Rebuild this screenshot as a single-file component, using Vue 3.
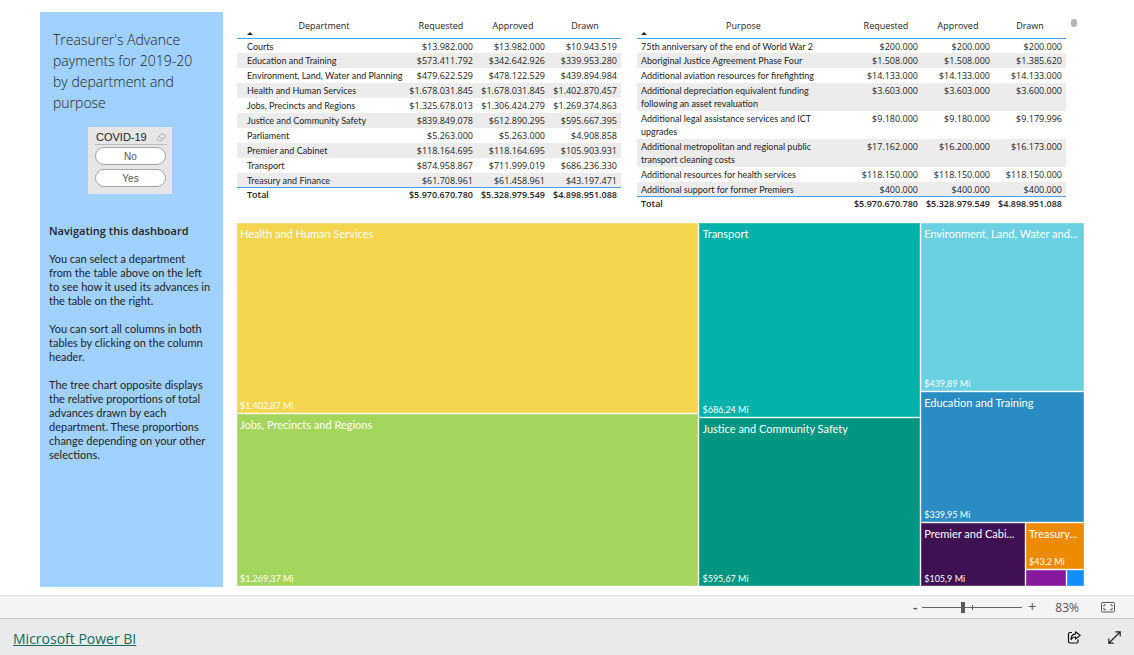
<script setup>
const departments = {
  name: 'Department',
  rows: [
    ['Courts', '$13.982.000', '$13.982.000', '$10.943.519'],
    ['Education and Training', '$573.411.792', '$342.642.926', '$339.953.280'],
    ['Environment, Land, Water and Planning', '$479.622.529', '$478.122.529', '$439.894.984'],
    ['Health and Human Services', '$1.678.031.845', '$1.678.031.845', '$1.402.870.457'],
    ['Jobs, Precincts and Regions', '$1.325.678.013', '$1.306.424.279', '$1.269.374.863'],
    ['Justice and Community Safety', '$839.849.078', '$612.890.295', '$595.667.395'],
    ['Parliament', '$5.263.000', '$5.263.000', '$4.908.858'],
    ['Premier and Cabinet', '$118.164.695', '$118.164.695', '$105.903.931'],
    ['Transport', '$874.958.867', '$711.999.019', '$686.236.330'],
    ['Treasury and Finance', '$61.708.961', '$61.458.961', '$43.197.471'],
  ],
}
const purposes = {
  name: 'Purpose',
  rows: [
    ['75th anniversary of the end of World War 2', '$200.000', '$200.000', '$200.000'],
    ['Aboriginal Justice Agreement Phase Four', '$1.508.000', '$1.508.000', '$1.385.620'],
    ['Additional aviation resources for firefighting', '$14.133.000', '$14.133.000', '$14.133.000'],
    ['Additional depreciation equivalent funding following an asset revaluation', '$3.603.000', '$3.603.000', '$3.600.000'],
    ['Additional legal assistance services and ICT upgrades', '$9.180.000', '$9.180.000', '$9.179.996'],
    ['Additional metropolitan and regional public transport cleaning costs', '$17.162.000', '$16.200.000', '$16.173.000'],
    ['Additional resources for health services', '$118.150.000', '$118.150.000', '$118.150.000'],
    ['Additional support for former Premiers', '$400.000', '$400.000', '$400.000'],
  ],
}
const tables = [departments, purposes]
const totals = ['$5.970.670.780', '$5.328.979.549', '$4.898.951.088']
</script>

<template>
  <div class="page">
    <main class="report">
      <aside class="panel">
        <h1>Treasurer's Advance payments for 2019-20 by department and purpose</h1>
        <section class="slicer">
          <header>
            <span>COVID-19</span>
            <button class="clear" aria-label="Clear selections">
              <svg width="11" height="10" viewBox="0 0 11 10" fill="none" stroke="#b0b0b0">
                <path d="M1 6.5 6 1.2 9.8 4.4 5 9H3.4L1 6.5ZM3.2 4.4 6.8 7.4" />
              </svg>
            </button>
          </header>
          <button class="choice">No</button>
          <button class="choice">Yes</button>
        </section>
        <div class="guide">
          <h2>Navigating this dashboard</h2>
          <p>You can select a department<br />from the table above on the left to see how it used its advances in the table on the right.</p>
          <p>You can sort all columns in both tables by clicking on the column header.</p>
          <p>The tree chart opposite displays the relative proportions of total advances drawn by each department. These proportions change depending on your other selections.</p>
        </div>
      </aside>

      <div class="content">
        <div class="tables">
          <table v-for="t in tables" :key="t.name" :class="t.name.toLowerCase()">
            <thead>
              <tr>
                <th class="first">{{ t.name }}<i class="sort"></i></th>
                <th>Requested</th>
                <th>Approved</th>
                <th>Drawn</th>
              </tr>
            </thead>
            <tbody>
              <tr v-for="r in t.rows" :key="r[0]">
                <td v-for="(c, i) in r" :key="i">{{ c }}</td>
              </tr>
            </tbody>
            <tfoot>
              <tr>
                <td>Total</td>
                <td v-for="c in totals" :key="c">{{ c }}</td>
              </tr>
            </tfoot>
          </table>
          <div class="scroll"></div>
        </div>

        <section class="treemap">
          <div class="col first-col">
            <div class="cell yellow"><span>Health and Human Services</span><small>$1.402,87 Mi</small></div>
            <div class="cell green"><span>Jobs, Precincts and Regions</span><small>$1.269,37 Mi</small></div>
          </div>
          <div class="col second-col">
            <div class="cell teal"><span>Transport</span><small>$686,24 Mi</small></div>
            <div class="cell jade"><span>Justice and Community Safety</span><small>$595,67 Mi</small></div>
          </div>
          <div class="col third-col">
            <div class="cell sky"><span>Environment, Land, Water and...</span><small>$439,89 Mi</small></div>
            <div class="cell blue"><span>Education and Training</span><small>$339,95 Mi</small></div>
            <div class="corner">
              <div class="cell plum"><span>Premier and Cabi...</span><small>$105,9 Mi</small></div>
              <div class="col corner-col">
                <div class="cell orange"><span>Treasury...</span><small>$43,2 Mi</small></div>
                <div class="tiny">
                  <div class="cell violet"></div>
                  <div class="cell azure"></div>
                </div>
              </div>
            </div>
          </div>
        </section>
      </div>
    </main>

    <div class="zoombar">
      <button class="step" aria-label="Zoom out">-</button>
      <input type="range" min="0" max="100" value="40" aria-label="Zoom level" />
      <button class="step" aria-label="Zoom in">+</button>
      <span class="percent">83%</span>
      <button class="icon" aria-label="Fit to page">
        <svg width="14" height="11" viewBox="0 0 14 11" fill="none" stroke="#555">
          <rect x="0.5" y="0.5" width="13" height="9.5" rx="1.2" />
          <path d="M4.8 2.9H2.9V4.6M2.9 6V7.7H4.8M9.2 2.9H11.1V4.6M11.1 6V7.7H9.2" />
        </svg>
      </button>
    </div>

    <footer class="footer">
      <a href="#">Microsoft Power BI</a>
      <button class="icon" aria-label="Share">
        <svg width="14" height="13" viewBox="0 0 14 13" fill="none" stroke="#111" stroke-width="1.2" stroke-linejoin="round">
          <path d="M5 1.5H3Q1.5 1.5 1.5 3V10.5Q1.5 12 3 12H9.5Q11 12 11 10.5V8.6" />
          <path d="M8.6 0.8 13.2 4.4 8.6 8V6Q5.6 5.8 4 8.6 4.2 3.2 8.6 2.8Z" />
        </svg>
      </button>
      <button class="icon" aria-label="Full screen">
        <svg width="13" height="13" viewBox="0 0 13 13" fill="none" stroke="#222" stroke-width="1.2">
          <path d="M1 12 12 1M7.4 0.8H12.2V5.6M0.8 7.4V12.2H5.6" />
        </svg>
      </button>
    </footer>
  </div>
</template>

<style>
body {
  background: #fff;
}
</style>

<style scoped>
.page {
  min-height: 100vh;
  display: flex;
  flex-direction: column;
  font-family: "Open Sans", "Noto Sans", sans-serif;
  color: #252423;
}
button {
  font: inherit;
  color: inherit;
  border: 0;
  padding: 0;
  background: none;
}
.report {
  flex: 1;
  display: flex;
  gap: 14px;
  padding: 12px 50px 8px 40px;
}
.panel {
  width: 183px;
  flex: none;
  box-sizing: border-box;
  padding: 17px 9px;
  background: #a0d1ff;
}
h1 {
  margin: 0 8px 0 4px;
  font-size: 14px;
  line-height: 21px;
  font-weight: 300;
}
.slicer {
  width: 84px;
  box-sizing: border-box;
  margin: 14px 0 0 39px;
  padding: 3px 5px 7px 7px;
  background: #e6e6e6;
  font-family: "Liberation Sans", Arial, sans-serif;
}
.slicer header {
  display: flex;
  justify-content: space-between;
  align-items: center;
  height: 14px;
  padding-left: 1px;
  border-bottom: 1px solid #bdbdbd;
  font-size: 11px;
}
.clear {
  display: flex;
}
.choice {
  display: block;
  width: 71px;
  height: 18px;
  margin-top: 2px;
  border: 1px solid #a6a6a6;
  border-radius: 9px;
  background: #fff;
  color: #555;
  font-size: 10px;
}
.choice + .choice {
  margin-top: 4px;
}
.guide {
  margin-top: 30px;
  font-family: Lato, "Open Sans", sans-serif;
  font-size: 11px;
  line-height: 14px;
}
.guide h2 {
  margin: 0;
  font-family: "Open Sans", sans-serif;
  font-size: 11px;
  font-weight: 600;
}
.guide p {
  margin: 14px 2px 0 0;
}
.content {
  flex: 1;
  min-width: 0;
  display: flex;
  flex-direction: column;
}
.tables {
  display: flex;
  align-items: flex-start;
  height: 211px;
}
table {
  border-collapse: separate;
  border-spacing: 0;
  table-layout: fixed;
  font-size: 9px;
  line-height: 13px;
}
.department {
  flex: 384;
  margin-right: 16px;
}
.purpose {
  flex: 429;
}
.scroll {
  width: 6px;
  height: 8px;
  margin: 7px 7px 0 5px;
  border-radius: 3px;
  background: #b3b3b3;
}
th {
  position: relative;
  width: 72px;
  height: 26px;
  padding: 0;
  border-bottom: 1px solid #4a9eed;
  font-weight: 400;
  text-align: center;
}
th.first {
  width: auto;
}
.department th.first {
  padding-left: 6px;
}
.sort {
  position: absolute;
  left: 10px;
  bottom: 3px;
  border: 3px solid transparent;
  border-top: 0;
  border-bottom-color: #252423;
}
.purpose .sort {
  left: 4px;
}
td {
  padding: 1px 4px;
  text-align: right;
  vertical-align: top;
}
td:first-child {
  padding-left: 10px;
  padding-right: 0;
  text-align: left;
}
tbody td:first-child {
  font-family: Lato, "Open Sans", sans-serif;
}
.purpose td:first-child {
  padding-left: 4px;
  padding-right: 28px;
}
tbody tr:first-child td,
tbody tr:last-child td {
  padding-bottom: 0;
}
tbody tr:nth-child(even) {
  background: #ececec;
}
tfoot td {
  padding-top: 0;
  border-top: 1px solid #4a9eed;
  font-weight: 600;
}
.treemap {
  flex: 1;
  display: grid;
  grid-template-columns: 462fr 221fr 163fr;
  gap: 1px;
  margin-bottom: 1px;
}
.col {
  display: grid;
  gap: 1px;
  min-width: 0;
}
.first-col {
  grid-template-rows: 190fr 172fr;
}
.second-col {
  grid-template-rows: 194fr 168fr;
}
.third-col {
  grid-template-rows: 168fr 130fr 63fr;
}
.corner {
  display: grid;
  grid-template-columns: 104fr 58fr;
  gap: 1px;
}
.corner-col {
  grid-template-rows: 45fr 16fr;
}
.tiny {
  display: grid;
  grid-template-columns: 39fr 17fr;
  gap: 1px;
}
.cell {
  display: flex;
  flex-direction: column;
  justify-content: space-between;
  min-width: 0;
  min-height: 0;
  padding: 0 3px;
  color: #fff;
  box-shadow: inset 0 0 0 1px rgba(255, 255, 255, 0.2);
}
.cell span,
.cell small {
  white-space: nowrap;
  font-family: Lato, "Open Sans", sans-serif;
  font-size: 11px;
  line-height: 22px;
}
.cell small {
  font-size: 9px;
  line-height: 15px;
}
.yellow { background: #f3d54e; }
.green { background: #a4d65e; }
.teal { background: #00b2a9; }
.jade { background: #009681; }
.sky { background: #6ad1e3; }
.blue { background: #298dc3; }
.plum { background: #3f1052; }
.orange { background: #ed8b00; }
.violet { background: #87189d; }
.azure { background: #118dff; }
.zoombar {
  display: flex;
  align-items: center;
  justify-content: flex-end;
  height: 22px;
  padding-right: 19px;
  border-top: 1px solid #dcdcdc;
  border-bottom: 1px solid #c8c8c8;
  background: #f4f4f4;
  color: #555;
}
.step {
  width: 14px;
  font-size: 14px;
  line-height: 20px;
}
.step:first-child {
  width: 8px;
  font-weight: 600;
}
input {
  appearance: none;
  width: 100px;
  height: 12px;
  margin: 0 3px;
  background:
    linear-gradient(#666, #666) 50px 4px / 1px 5px no-repeat,
    linear-gradient(#666, #666) 0 6px / 100% 1px no-repeat;
}
input::-webkit-slider-thumb {
  appearance: none;
  width: 4px;
  height: 11px;
  background: #5c5c5c;
}
.percent {
  margin: 0 22px 0 16px;
  font-size: 12px;
}
.icon {
  display: flex;
}
.footer {
  display: flex;
  align-items: center;
  gap: 27px;
  height: 36px;
  padding: 0 13px;
  background: #eaeaea;
}
.footer a {
  margin: 4px auto 0 0;
  color: #0f6b5f;
  font-size: 14px;
  line-height: 20px;
}
</style>
